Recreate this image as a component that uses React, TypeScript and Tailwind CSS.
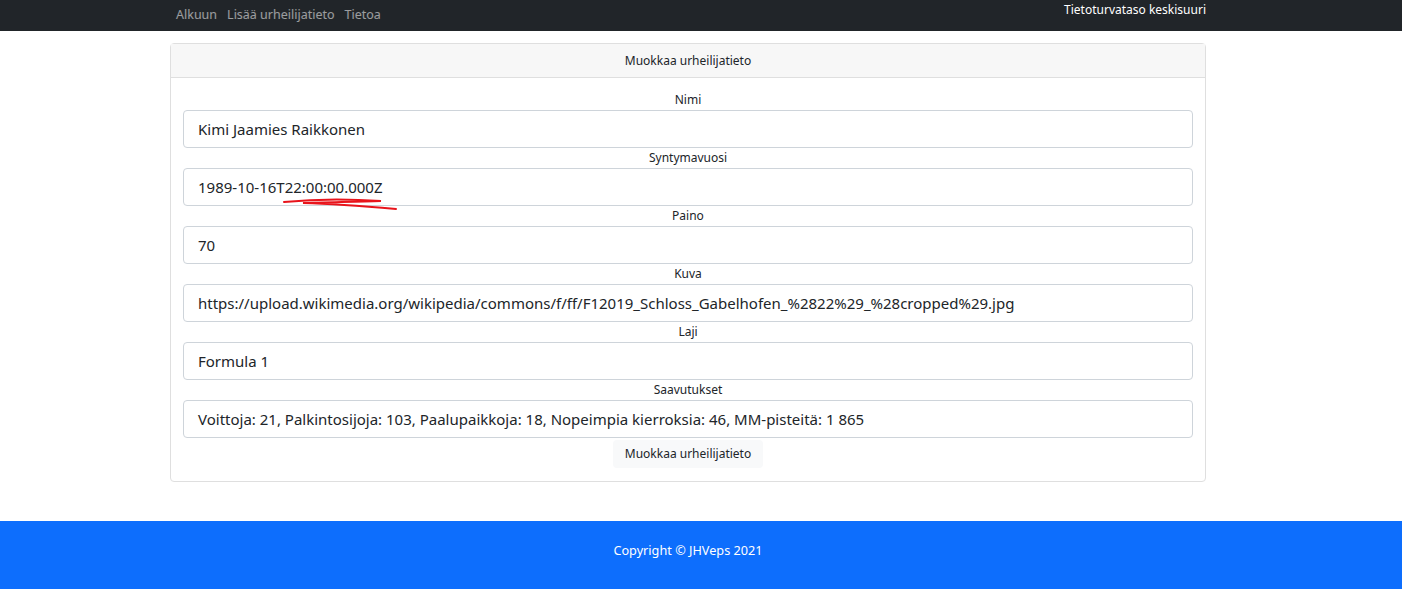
const fields = [
  { label: 'Nimi', value: 'Kimi Jaamies Raikkonen' },
  { label: 'Syntymavuosi', value: '1989-10-16T22:00:00.000Z' },
  { label: 'Paino', value: '70' },
  { label: 'Kuva', value: 'https://upload.wikimedia.org/wikipedia/commons/f/ff/F12019_Schloss_Gabelhofen_%2822%29_%28cropped%29.jpg' },
  { label: 'Laji', value: 'Formula 1' },
  { label: 'Saavutukset', value: 'Voittoja: 21, Palkintosijoja: 103, Paalupaikkoja: 18, Nopeimpia kierroksia: 46, MM-pisteitä: 1 865' },
];

// red pen mark under the time part of the date
const Scribble = () => (
  <svg className="absolute left-[99px] top-[29px]" width="116" height="14" viewBox="0 0 116 14" fill="none">
    <path
      d="M1 4 C 30 1, 70 1, 98 3 C 70 4, 40 4, 20 5 C 55 6, 90 9, 113 11"
      stroke="#e8141b"
      strokeWidth="2"
      strokeLinecap="round"
    />
  </svg>
);

const App = () => {
  return (
    <div className="min-h-[589px] flex flex-col bg-white text-[#212529] font-['Noto_Sans',sans-serif]">
      <nav className="h-[31px] bg-[#212529] flex items-start">
        <div className="flex gap-[10px] pl-[176px] pt-[6px] text-[12.5px] text-white/55">
          <span>Alkuun</span>
          <span>Lisää urheilijatieto</span>
          <span>Tietoa</span>
        </div>
        <div className="ml-auto pr-[196px] pt-[1px] text-[12px] text-white">Tietoturvataso keskisuuri</div>
      </nav>

      <main className="pl-[170px] pt-[12px] pb-[39px] pr-[196px]">
        <div className="border border-[#dfdfdf] rounded">
          <div className="h-[34px] bg-[#f7f7f7] border-b border-[#dfdfdf] flex items-center justify-center text-[12px]">
            Muokkaa urheilijatieto
          </div>
          <div className="px-3 pt-[12px] pb-[13px] flex flex-col">
            {fields.map((f) => (
              <div key={f.label} className="flex flex-col">
                <label className="h-[20px] text-center text-[12px] leading-[20px]">{f.label}</label>
                <div className="relative h-[38px] border border-[#ced4da] rounded px-[14px] flex items-center text-[15px] whitespace-nowrap">
                  {f.value}
                  {f.label === 'Syntymavuosi' && <Scribble />}
                </div>
              </div>
            ))}
            <div className="flex justify-center pt-[2px]">
              <button className="h-[28px] px-[12px] bg-[#f8f9fa] rounded text-[12px]">Muokkaa urheilijatieto</button>
            </div>
          </div>
        </div>
      </main>

      <footer className="flex-1 bg-[#0d6efd] flex items-start justify-center pt-[20px] pr-[26px] text-white text-[12.7px]">
        Copyright © JHVeps 2021
      </footer>
    </div>
  );
};

export default App;
